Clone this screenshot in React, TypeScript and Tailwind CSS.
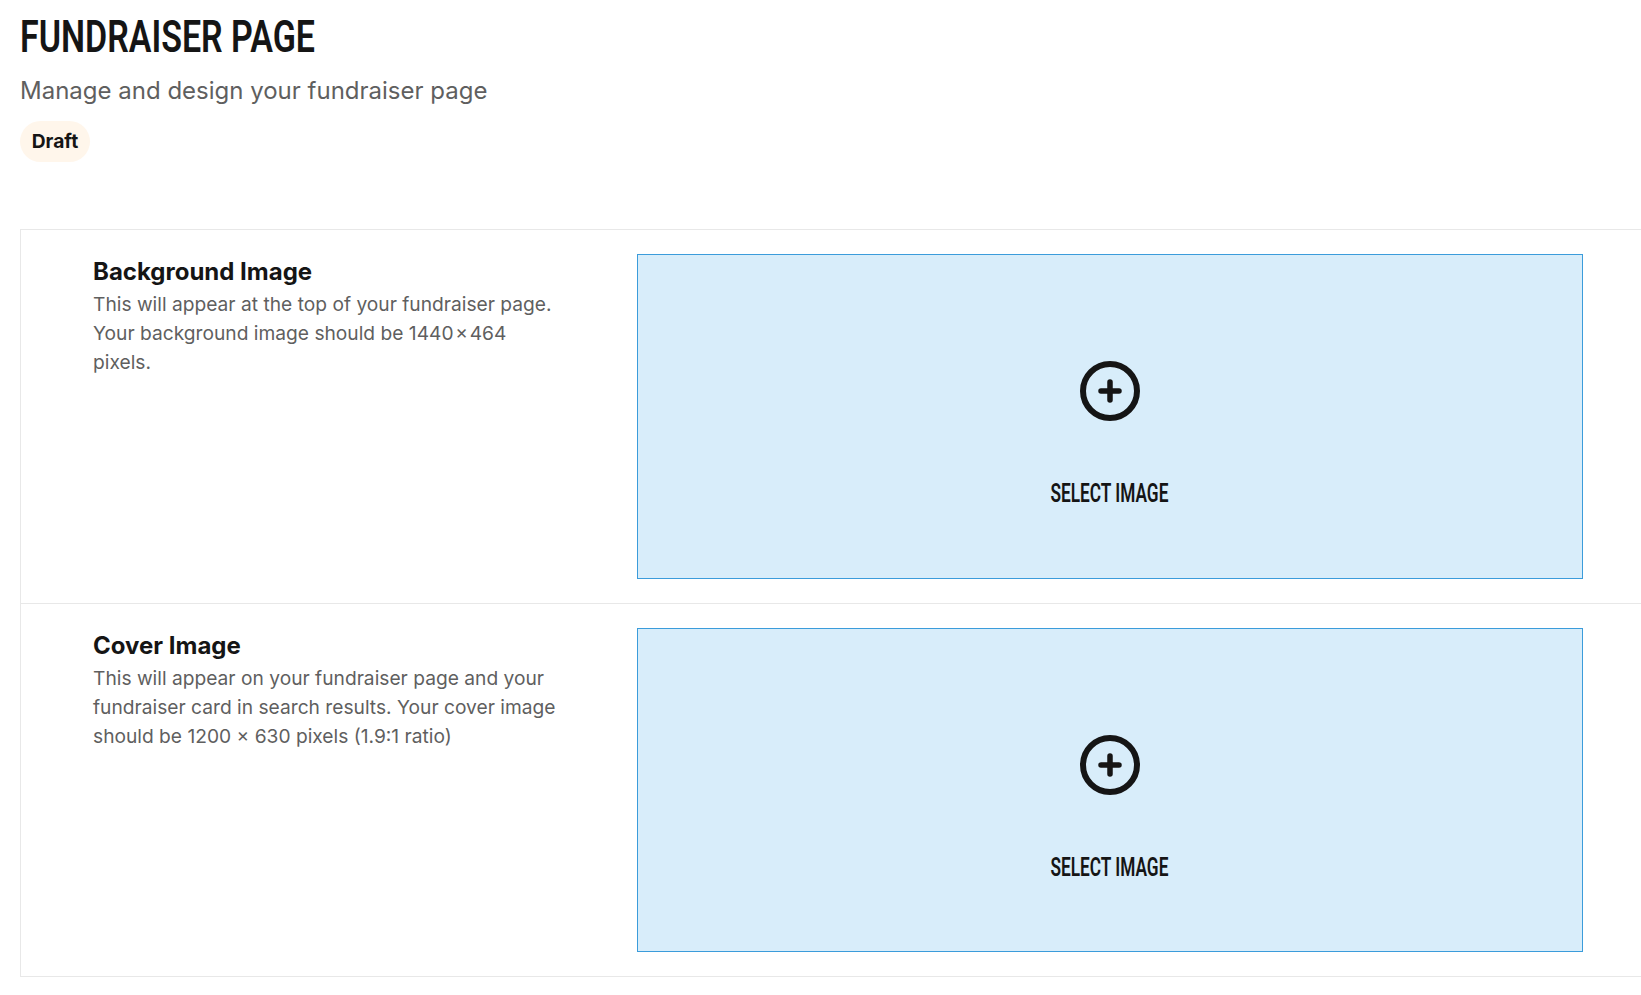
const condensed = "font-['Roboto',sans-serif] font-semibold inline-block whitespace-nowrap";

const PlusCircle = () => (
  <svg width="60" height="60" viewBox="0 0 60 60" fill="none" stroke="#151515" strokeLinecap="round">
    <circle cx="30" cy="30" r="27" strokeWidth="6" />
    <path d="M21 30h18M30 21v18" strokeWidth="5.5" />
  </svg>
);

const ImageRow = ({ title, lines, last }: { title: string; lines: string[]; last?: boolean }) => (
  <div className={`flex pt-6 pb-6 ${last ? "" : "border-b border-[#e8e8e8]"}`}>
    <div className="w-[616px] shrink-0 pl-[72px]">
      <h2 className="text-[24px] leading-7 mt-[4px] font-bold text-[#151515]">{title}</h2>
      <div className="text-[19.2px] leading-[29px] mt-[4px] text-[#5f5f5f]">
        {lines.map((l) => (
          <p key={l}>{l}</p>
        ))}
      </div>
    </div>
    <div className="w-[946px] h-[324.5px] shrink-0 border border-[#3b9cdb] bg-[#d8edfa] flex flex-col items-center pt-[106px]">
      <PlusCircle />
      <div className="mt-[58px] h-[30px] flex items-center justify-center">
        <span className={`${condensed} text-[25px] leading-[30px] text-[#151515] scale-x-[0.69] -translate-x-px`}>SELECT IMAGE</span>
      </div>
    </div>
  </div>
);

export default function App() {
  return (
    <div className="h-screen overflow-hidden bg-white pl-5 font-['Inter',sans-serif]">
      <div className="h-[229px] pt-[12px]">
        <h1 className={`${condensed} text-[44px] leading-[50px] text-[#151515] origin-left scale-x-[0.772]`}>FUNDRAISER PAGE</h1>
        <p className="text-[24px] leading-8 mt-[13px] text-[#5f5f5f] whitespace-nowrap">Manage and design your fundraiser page</p>
        <div className="mt-[14px] w-[70px] h-[41px] rounded-full bg-[#fff6eb] flex items-center justify-center pb-px text-[19.2px] font-bold text-[#151515]">
          Draft
        </div>
      </div>
      <div className="border-t border-l border-b border-[#e8e8e8] w-[1640px]">
        <ImageRow
          title="Background Image"
          lines={["This will appear at the top of your fundraiser page.", "Your background image should be 1440\u200a×\u200a464", "pixels."]}
        />
        <ImageRow
          title="Cover Image"
          last
          lines={["This will appear on your fundraiser page and your", "fundraiser card in search results. Your cover image", "should be 1200 × 630 pixels (1.9:1 ratio)"]}
        />
      </div>
    </div>
  );
}
